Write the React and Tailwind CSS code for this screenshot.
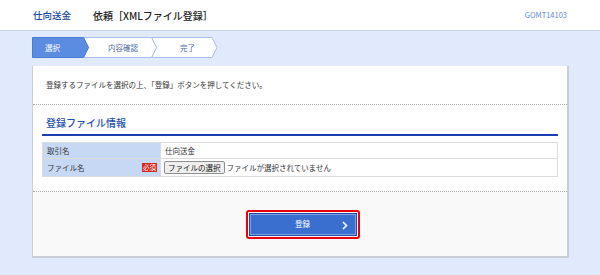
import React from 'react';

const font = { fontFamily: '"Noto Sans CJK JP", "Noto Sans", sans-serif' };

// step bar drawn as chevrons, labels laid over
const StepBar = () => (
  <div className="relative ml-[32px] mt-[6px] h-[21px] w-[186px]">
    <svg width="186" height="21" viewBox="0 0 186 21" className="absolute left-0 top-0">
      <polygon points="119.5,0.5 180,0.5 185,10.5 180,20.5 119.5,20.5 124.5,10.5" fill="#fff" stroke="#a8c0ea" />
      <polygon points="51.5,0.5 119.5,0.5 124.5,10.5 119.5,20.5 51.5,20.5 56.5,10.5" fill="#fff" stroke="#a8c0ea" />
      <polygon points="0.5,0.5 51.5,0.5 56.5,10.5 51.5,20.5 0.5,20.5" fill="#5a8ce2" stroke="#4a7bd6" />
    </svg>
    <div className="relative flex h-full items-center text-[7.5px] leading-none">
      <span className="w-[52px] pl-[13px] text-white">選択</span>
      <span className="w-[68px] pl-[24px] text-[#4d6aa6]">内容確認</span>
      <span className="w-[62px] pl-[28px] text-[#4d6aa6]">完了</span>
    </div>
  </div>
);

export default function App() {
  return (
    <div className="h-[275px] w-[600px] overflow-hidden bg-[#e0eafc]" style={font}>
      {/* header */}
      <div className="flex h-[31px] items-center border-b border-[#c8d7f0] bg-white pl-[33px] pr-[33px]">
        <span className="text-[9.5px] font-medium text-[#1a48a0]">仕向送金</span>
        <span className="ml-[22px] text-[10px] font-medium text-[#222]">依頼［XMLファイル登録］</span>
        <span className="ml-auto text-[7.5px] text-[#5b86d9]">GOMT14103</span>
      </div>

      <StepBar />

      {/* card */}
      <div className="ml-[32px] mt-[8px] w-[537px] border-b-2 border-l border-r-2 border-[#c9cdd6] bg-white">
        <div className="flex h-[38px] items-center pl-[13px] text-[7.5px] text-[#333]">
          登録するファイルを選択の上、「登録」ボタンを押してください。
        </div>
        <div className="border-t border-dotted border-[#aaa]" />

        <div className="px-[9px] pb-[14px]">
          <div className="flex h-[29px] items-end pb-[4px] pl-[4px] text-[10px] font-medium text-[#1d4fae]">
            登録ファイル情報
          </div>
          <div className="h-[2px] bg-[#1c3fb4]" />
          <table className="mt-[6px] w-full border-collapse text-[7.5px] text-[#333]">
            <tbody>
              <tr className="h-[16px]">
                <td className="w-[118px] border border-[#dcdcdc] bg-[#c6d8f3] pl-[4px]">取引名</td>
                <td className="border border-[#dcdcdc] pl-[4px]">仕向送金</td>
              </tr>
              <tr className="h-[18px]">
                <td className="border border-[#dcdcdc] bg-[#c6d8f3] pl-[4px]">
                  <div className="flex items-center justify-between pr-[3px]">
                    <span>ファイル名</span>
                    <span className="bg-[#d8261c] px-[1px] text-[6.5px] leading-[9px] text-white">必須</span>
                  </div>
                </td>
                <td className="border border-[#dcdcdc] pl-[3px]">
                  <div className="flex items-center">
                    <span className="rounded-[2px] border border-[#8f8f8f] bg-[#efefef] px-[3px] text-[7.5px] leading-[11px] text-[#111]">
                      ファイルの選択
                    </span>
                    <span className="ml-[2px]">ファイルが選択されていません</span>
                  </div>
                </td>
              </tr>
            </tbody>
          </table>
        </div>

        <div className="border-t border-dotted border-[#aaa]" />
        <div className="flex h-[64px] items-center justify-center bg-[#f9f9f9] pl-[5px]">
          <div className="rounded-[3px] border-[2.5px] border-[#e8000e] p-[1px]">
            <div className="relative flex h-[23px] w-[108px] items-center justify-center border border-[#1e4aa8] bg-[#3b6fcf] text-[7.5px] text-white shadow-[inset_0_0_0_1px_#7ea0e0]">
              登録
              <svg width="6" height="9" viewBox="0 0 6 9" className="absolute right-[8px] top-[7px]">
                <polyline points="1,1 4.5,4.5 1,8" fill="none" stroke="#fff" strokeWidth="1.5" />
              </svg>
            </div>
          </div>
        </div>
      </div>
    </div>
  );
}
